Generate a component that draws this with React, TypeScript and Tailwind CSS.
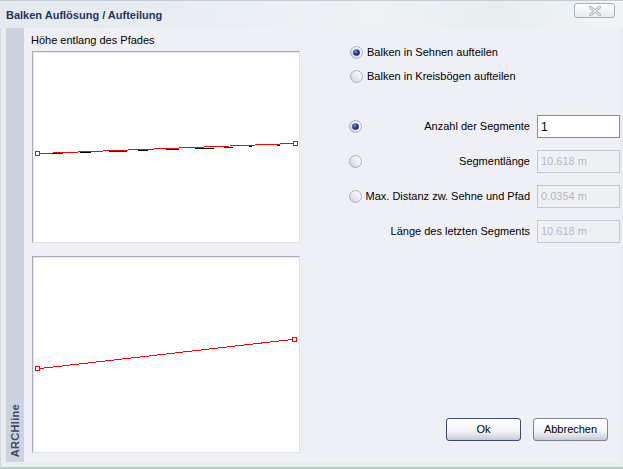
import React from "react";

const font = { fontFamily: '"Liberation Sans", Arial, sans-serif' };

function Radio({ checked }: { checked?: boolean }) {
  return (
    <svg width="13" height="13" viewBox="0 0 13 13" className="shrink-0">
      <defs>
        <linearGradient id="rbg" x1="0" y1="1" x2="1" y2="0">
          <stop offset="0" stopColor="#c6cdd8" />
          <stop offset="0.6" stopColor="#eef1f5" />
          <stop offset="1" stopColor="#ffffff" />
        </linearGradient>
        <radialGradient id="rdot" cx="0.4" cy="0.35" r="0.7">
          <stop offset="0" stopColor="#8d9be0" />
          <stop offset="0.5" stopColor="#2c3a8e" />
          <stop offset="1" stopColor="#121c5a" />
        </radialGradient>
      </defs>
      <circle cx="6.5" cy="6.5" r="6" fill="url(#rbg)" stroke="#a8b0bd" strokeWidth="1" />
      {checked && <circle cx="6.5" cy="6.5" r="3.3" fill="url(#rdot)" />}
    </svg>
  );
}

function Panel({ children, h }: { children: React.ReactNode; h: string }) {
  return (
    <div
      className={`w-[268px] ${h} bg-white border border-t-[#a9abbd] border-l-[#a9abbd] border-b-[#e1e2e9] border-r-[#e1e2e9] shadow-[inset_1px_1px_0_#e8e9ef]`}
    >
      {children}
    </div>
  );
}

function Marker({ x, y }: { x: number; y: number }) {
  return (
    <g>
      <rect x={x - 2} y={y - 2} width="5" height="5" fill="#ff0000" />
      <rect x={x - 1} y={y - 1} width="3" height="3" fill="#ffffff" />
    </g>
  );
}

function TopChart() {
  const x0 = 4, y0 = 101, x1 = 262, y1 = 91;
  const yAt = (x: number) => y0 + ((y1 - y0) * (x - x0)) / (x1 - x0);
  const segs = [
    [51, 62], [79, 90], [108, 126], [137, 147], [165, 178], [194, 213], [223, 232], [248, 251], [276, 279],
  ].map(([a, b]) => [a - 32, b - 32]);
  return (
    <svg width="266" height="190" viewBox="0 0 266 190" shapeRendering="crispEdges">
      {segs.map(([a, b], i) => {
        const y = Math.round(yAt((a + b) / 2)) + 1;
        return <rect key={i} x={a} y={y} width={b - a} height="1" fill="#000" />;
      })}
      <line x1={x0 + 3} y1={y0 + 0.5} x2={x1 - 2} y2={y1 + 0.5} stroke="#ff0000" strokeWidth="1" />
      <Marker x={x0} y={y0} />
      <Marker x={x1} y={y1} />
    </svg>
  );
}

function BottomChart() {
  const x0 = 4, y0 = 111, x1 = 261, y1 = 82;
  return (
    <svg width="266" height="195" viewBox="0 0 266 195" shapeRendering="crispEdges">
      <line x1={x0 + 3} y1={y0 + 0.5} x2={x1 - 2} y2={y1 + 0.5} stroke="#ff0000" strokeWidth="1" />
      <Marker x={x0} y={y0} />
      <Marker x={x1} y={y1} />
    </svg>
  );
}

function FormRow({ label, value, checked, enabled, radio = true }: { label: string; value: string; checked?: boolean; enabled?: boolean; radio?: boolean }) {
  return (
    <div className="flex items-center h-[23px]">
      <div className="w-[13px] ml-[8px]">{radio && <Radio checked={checked} />}</div>
      <div className="flex-1 text-right pr-[7px] text-black whitespace-nowrap">{label}</div>
      <div
        className={`w-[83px] h-[23px] flex items-center pl-[3px] border ${
          enabled ? "bg-white border-[#7f8fa3] text-black text-[12px]" : "bg-[#eff0f4] border-[#c5c8d0] text-[#b4b8c2]"
        }`}
      >
        {value}
      </div>
    </div>
  );
}

function Button({ label, primary }: { label: string; primary?: boolean }) {
  return (
    <div
      className={`w-[75px] h-[23px] rounded-[3px] border flex items-center justify-center text-black bg-[linear-gradient(to_bottom,#ffffff_0%,#f4f5f8_55%,#d9dbe2_85%,#c5c8d1_100%)] ${
        primary ? "border-[#3a4a6a]" : "border-[#7c8595]"
      }`}
    >
      {label}
    </div>
  );
}

export default function App() {
  return (
    <div className="w-[623px] h-[469px] flex flex-col bg-[#e9edf2] text-[11px] overflow-hidden" style={font}>
      {/* title bar */}
      <div className="h-[28px] flex items-center justify-between pl-[6px] pr-[8px] border-t border-[#c3cad4] bg-[linear-gradient(to_right,#e4e9ef,#eef2f5_60%,#e6eef0_80%,#f1f4f7)]">
        <span className="font-bold text-[11px] text-[#1e3560] mt-[2px]">Balken Auflösung / Aufteilung</span>
        <div className="w-[41px] h-[15px] mb-[8px] rounded-[3px] border border-[#a9b0ba] bg-[linear-gradient(to_bottom,#ffffff,#e6e9ee)] flex items-center justify-center">
          <svg width="12" height="10" viewBox="0 0 12 10">
            <path d="M1 1 L11 9 M11 1 L1 9" stroke="#b3b9c2" strokeWidth="3" strokeLinecap="square" />
            <path d="M1 1 L11 9 M11 1 L1 9" stroke="#f2f4f7" strokeWidth="1" />
          </svg>
        </div>
      </div>

      {/* body */}
      <div className="flex-1 flex pl-[5px] pr-[3px] pb-[5px] border-l border-[#d2d8e0] border-b-2 border-b-[#a8d6c6]">
        {/* brand strip */}
        <div className="w-[18px] bg-[#ccd3de] flex flex-col justify-end items-center pb-[5px]">
          <span className="[writing-mode:vertical-rl] rotate-180 font-bold text-[11px] text-[#3b4a68] tracking-[0.3px]">
            ARCHline
          </span>
        </div>

        {/* client */}
        <div className="flex-1 flex bg-[#eff0f5]">
          {/* left column */}
          <div className="w-[317px] pl-[8px] pt-[5px] flex flex-col">
            <div className="h-[14px] text-black leading-[14px] -ml-[1px]">Höhe entlang des Pfades</div>
            <div className="mt-[4px]">
              <Panel h="h-[192px]">
                <TopChart />
              </Panel>
            </div>
            <div className="mt-[13px]">
              <Panel h="h-[197px]">
                <BottomChart />
              </Panel>
            </div>
          </div>

          {/* right column */}
          <div className="flex-1 flex flex-col pt-[13px]">
            <div className="flex flex-col gap-[2px] pl-[9px]">
              <div className="h-[22px] flex items-center gap-[4px]">
                <Radio checked />
                <span className="text-black">Balken in Sehnen aufteilen</span>
              </div>
              <div className="h-[22px] flex items-center gap-[4px]">
                <Radio />
                <span className="text-black">Balken in Kreisbögen aufteilen</span>
              </div>
            </div>

            <div className="mt-[28px] flex flex-col gap-[12px]">
              <FormRow label="Anzahl der Segmente" value="1" checked enabled />
              <FormRow label="Segmentlänge" value="10.618 m" />
              <FormRow label="Max. Distanz zw. Sehne und Pfad" value="0.0354 m" />
              <FormRow label="Länge des letzten Segments" value="10.618 m" radio={false} />
            </div>

            <div className="mt-auto mb-[21px] mr-[12px] flex justify-end gap-[12px]">
              <Button label="Ok" primary />
              <Button label="Abbrechen" />
            </div>
          </div>
        </div>
      </div>
    </div>
  );
}
